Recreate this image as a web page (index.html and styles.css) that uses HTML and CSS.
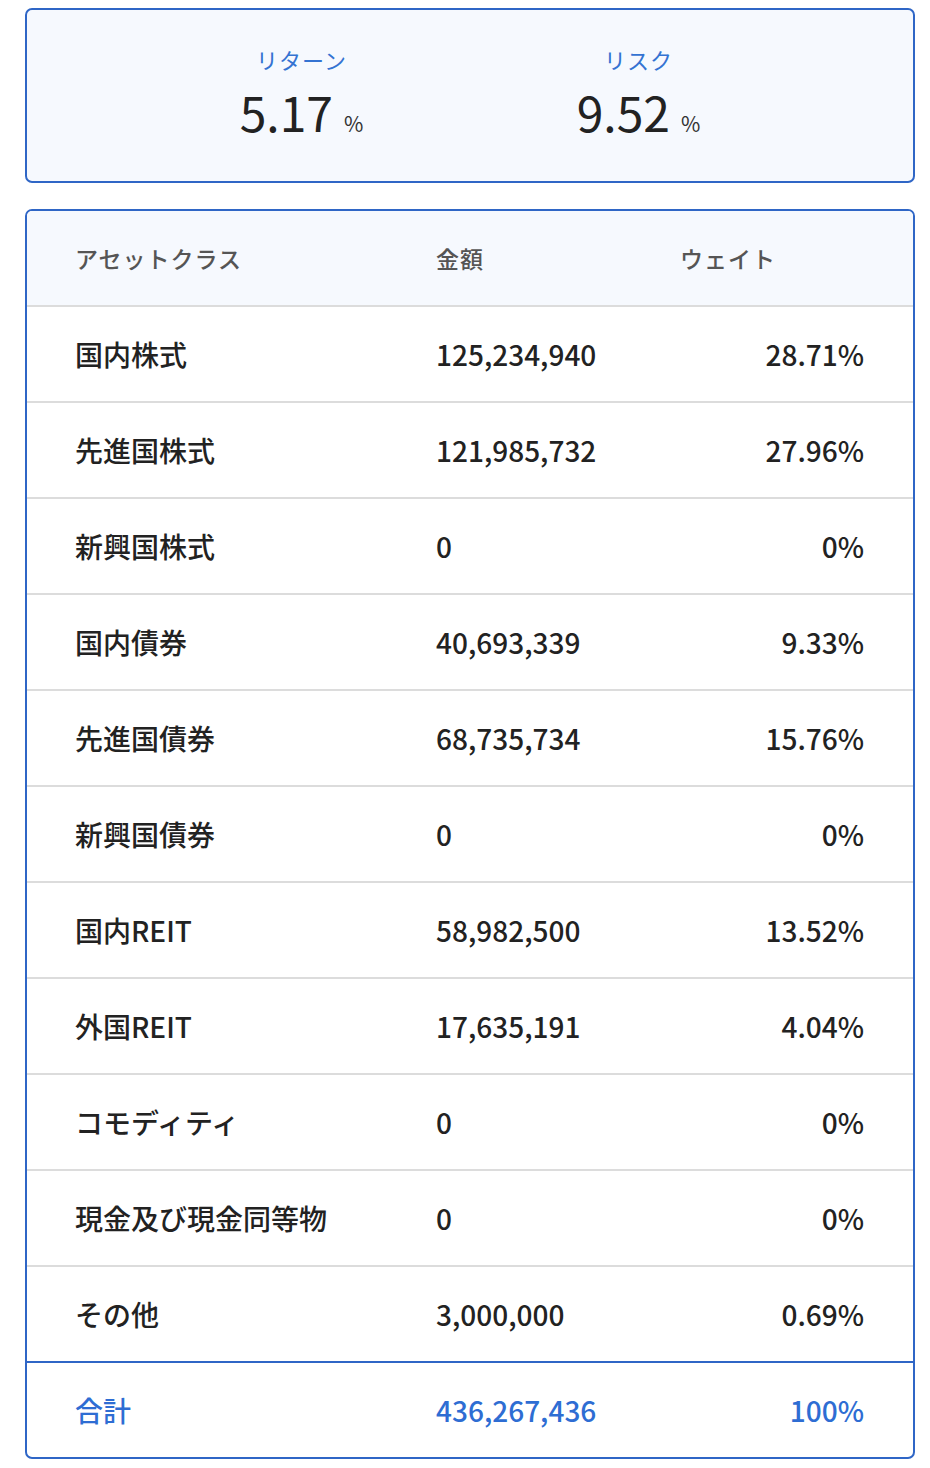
FILE: index.html
```html
<!DOCTYPE html>
<html lang="ja">
<head>
<meta charset="utf-8">
<link rel="stylesheet" href="styles.css">
</head>
<body>
<div class="page">
  <section class="summary">
    <div class="metric">
      <div class="metric-label">リターン</div>
      <div class="metric-value">5.17<span class="unit">%</span></div>
    </div>
    <div class="metric">
      <div class="metric-label">リスク</div>
      <div class="metric-value">9.52<span class="unit">%</span></div>
    </div>
  </section>

  <section class="table">
    <div class="row head">
      <div class="c1">アセットクラス</div>
      <div class="c2">金額</div>
      <div class="c3">ウェイト</div>
    </div>
    <div class="row"><div class="c1">国内株式</div><div class="c2">125,234,940</div><div class="c3">28.71%</div></div>
    <div class="row"><div class="c1">先進国株式</div><div class="c2">121,985,732</div><div class="c3">27.96%</div></div>
    <div class="row"><div class="c1">新興国株式</div><div class="c2">0</div><div class="c3">0%</div></div>
    <div class="row"><div class="c1">国内債券</div><div class="c2">40,693,339</div><div class="c3">9.33%</div></div>
    <div class="row"><div class="c1">先進国債券</div><div class="c2">68,735,734</div><div class="c3">15.76%</div></div>
    <div class="row"><div class="c1">新興国債券</div><div class="c2">0</div><div class="c3">0%</div></div>
    <div class="row"><div class="c1">国内REIT</div><div class="c2">58,982,500</div><div class="c3">13.52%</div></div>
    <div class="row"><div class="c1">外国REIT</div><div class="c2">17,635,191</div><div class="c3">4.04%</div></div>
    <div class="row"><div class="c1">コモディティ</div><div class="c2">0</div><div class="c3">0%</div></div>
    <div class="row"><div class="c1">現金及び現金同等物</div><div class="c2">0</div><div class="c3">0%</div></div>
    <div class="row"><div class="c1">その他</div><div class="c2">3,000,000</div><div class="c3">0.69%</div></div>
    <div class="row total"><div class="c1">合計</div><div class="c2">436,267,436</div><div class="c3">100%</div></div>
  </section>
</div>
</body>
</html>
```

FILE: styles.css
```css
* { box-sizing: border-box; }
html, body { margin: 0; padding: 0; background: #ffffff; }
body {
  font-family: "Noto Sans CJK JP", "Noto Sans", sans-serif;
  color: #222;
}
.page {
  width: 890px;
  margin: 8px 0 0 25px;
  display: flex;
  flex-direction: column;
  gap: 26px;
}
.summary {
  height: 175px;
  border: 2px solid #2f66c6;
  border-radius: 7px;
  background: #f6f9fe;
  display: grid;
  grid-template-columns: 337px 337px;
  justify-content: center;
  align-content: start;
  padding-top: 34px;
}
.metric {
  display: flex;
  flex-direction: column;
  align-items: center;
}
.metric-label {
  font-size: 22px;
  line-height: 30px;
  color: #3473d2;
  letter-spacing: 1px;
}
.metric-value {
  font-size: 48px;
  line-height: 58px;
  margin-top: 8px;
  color: #222;
  font-weight: 400;
}
.unit {
  font-size: 21px;
  margin-left: 11px;
  color: #333;
}
.table {
  border: 2px solid #2f66c6;
  border-radius: 7px;
  overflow: hidden;
}
.row {
  display: grid;
  grid-template-columns: 361px 244px 184px;
  padding: 0 48px;
  height: 96px;
  align-items: center;
  border-top: 2px solid #dcdcdc;
  font-size: 28px;
  font-weight: 500;
  color: #222;
}
.row .c3 { text-align: right; }
.row.head {
  border-top: none;
  height: 94px;
  background: #f6f9fe;
  font-size: 23px;
  color: #555;
  letter-spacing: 1px;
}
.row.head .c3 { text-align: left; }
.row.total {
  border-top: 2px solid #2f66c6;
  color: #2e6dd3;
  height: 96px;
}
```
